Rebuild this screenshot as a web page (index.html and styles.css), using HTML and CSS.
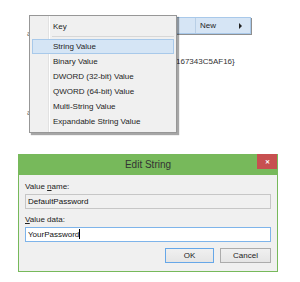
FILE: index.html
```html
<!DOCTYPE html>
<html lang="en">
<head>
<meta charset="UTF-8" />
<title>Edit String</title>
<link rel="stylesheet" href="styles.css">
</head>
<body>
<div id="desk">
    <span class="behind behind-a">a</span>
    <span class="behind behind-b">a</span>
    <span class="guid">167343C5AF16}</span>
    <div class="new-item">
        <span class="new-label">New</span>
        <span class="new-arrow"></span>
    </div>
    <div class="menu">
        <div class="menu-item">Key</div>
        <div class="menu-sep"></div>
        <div class="menu-item hot">String Value</div>
        <div class="menu-item">Binary Value</div>
        <div class="menu-item">DWORD (32-bit) Value</div>
        <div class="menu-item">QWORD (64-bit) Value</div>
        <div class="menu-item">Multi-String Value</div>
        <div class="menu-item">Expandable String Value</div>
    </div>
</div>

<div class="dialog">
    <div class="titlebar">
        <span class="title">Edit String</span>
        <span class="close">&#x2715;</span>
    </div>
    <div class="dialog-body">
        <label class="field-label">Value <u>n</u>ame:</label>
        <div class="field field-off">DefaultPassword</div>
        <label class="field-label"><u>V</u>alue data:</label>
        <div class="field field-on">YourPassword<span class="caret"></span></div>
        <div class="buttons">
            <div class="btn btn-default">OK</div>
            <div class="btn">Cancel</div>
        </div>
    </div>
</div>
</body>
</html>
```

FILE: styles.css
```css
body {
    margin: 0;
    background: #fff;
    font-family: "Liberation Sans", Arial, sans-serif;
    font-size: 8px;
    color: #1e1e1e;
}
#desk {
    position: relative;
    height: 154px;
}
.behind {
    position: absolute;
    left: 27px;
    font-size: 8px;
    color: #666;
}
.behind-a { top: 29px; }
.behind-b { top: 108px; }
.guid {
    position: absolute;
    left: 176px;
    top: 57px;
    font-size: 8px;
    color: #333;
}
.new-item {
    position: absolute;
    left: 175px;
    top: 17px;
    width: 76px;
    height: 17px;
    box-sizing: border-box;
    display: flex;
    align-items: center;
    background: #d6e5f5;
    border: 1px solid #a9c9ea;
    box-shadow: 1px 1px 0 #8f8f8f;
}
.new-item::before {
    content: "";
    align-self: stretch;
    width: 19px;
    border-right: 1px solid #b9cfe6;
}
.new-label {
    margin-left: 4px;
    flex: 1;
}
.new-arrow {
    width: 0;
    height: 0;
    margin-right: 8px;
    border-top: 3px solid transparent;
    border-bottom: 3px solid transparent;
    border-left: 3px solid #222;
}
.menu {
    position: absolute;
    left: 29px;
    top: 15px;
    width: 148px;
    box-sizing: border-box;
    padding: 3px 2px;
    background: #f0f0f0 linear-gradient(to right, transparent 18px, #e2e2e2 18px, #e2e2e2 19px, #fff 19px, #fff 20px, transparent 20px);
    border: 1px solid #979797;
    box-shadow: 2px 2px 1px rgba(0, 0, 0, 0.35);
}
.menu-item {
    height: 15px;
    line-height: 15px;
    padding-left: 21px;
    box-sizing: border-box;
    white-space: nowrap;
}
.menu-item.hot {
    background: #d5e5f5;
    border: 1px solid #a8c9ea;
    line-height: 13px;
    padding-left: 20px;
}
.menu-sep {
    height: 1px;
    margin: 2px 0 2px 20px;
    background: #d7d7d7;
}
.dialog {
    margin-left: 18px;
    width: 260px;
}
.titlebar {
    position: relative;
    height: 21px;
    background: #77b95b;
    display: flex;
    justify-content: center;
    align-items: center;
}
.title {
    font-size: 10px;
    color: #333;
}
.close {
    position: absolute;
    right: 1px;
    top: 0;
    width: 20px;
    height: 15px;
    background: #c75050;
    color: #fff;
    font-size: 6px;
    font-weight: bold;
    display: flex;
    justify-content: center;
    align-items: center;
}
.dialog-body {
    background: #f0f0f0;
    border: 1px solid #77b95b;
    border-top: none;
    padding: 6px 6px 8px 6px;
    display: flex;
    flex-direction: column;
}
.field-label {
    height: 12px;
    line-height: 12px;
    color: #222;
}
.field {
    height: 15px;
    box-sizing: border-box;
    margin-top: 1px;
    padding-left: 2px;
    line-height: 13px;
    color: #111;
}
.field-off {
    background: #f0f0f0;
    border: 1px solid #c6c6c6;
    margin-bottom: 5px;
}
.field-on {
    background: #fff;
    border: 1px solid #7eb4ea;
    margin-bottom: 6px;
}
.caret {
    display: inline-block;
    width: 1px;
    height: 10px;
    background: #000;
    vertical-align: -2px;
}
.buttons {
    display: flex;
    justify-content: flex-end;
    gap: 6px;
}
.btn {
    width: 51px;
    height: 15px;
    box-sizing: border-box;
    border: 1px solid #acacac;
    background: linear-gradient(#f0f0f0, #e5e5e5);
    text-align: center;
    line-height: 13px;
    color: #222;
}
.btn-default {
    width: 49px;
    border-color: #66a7e8;
}
```
